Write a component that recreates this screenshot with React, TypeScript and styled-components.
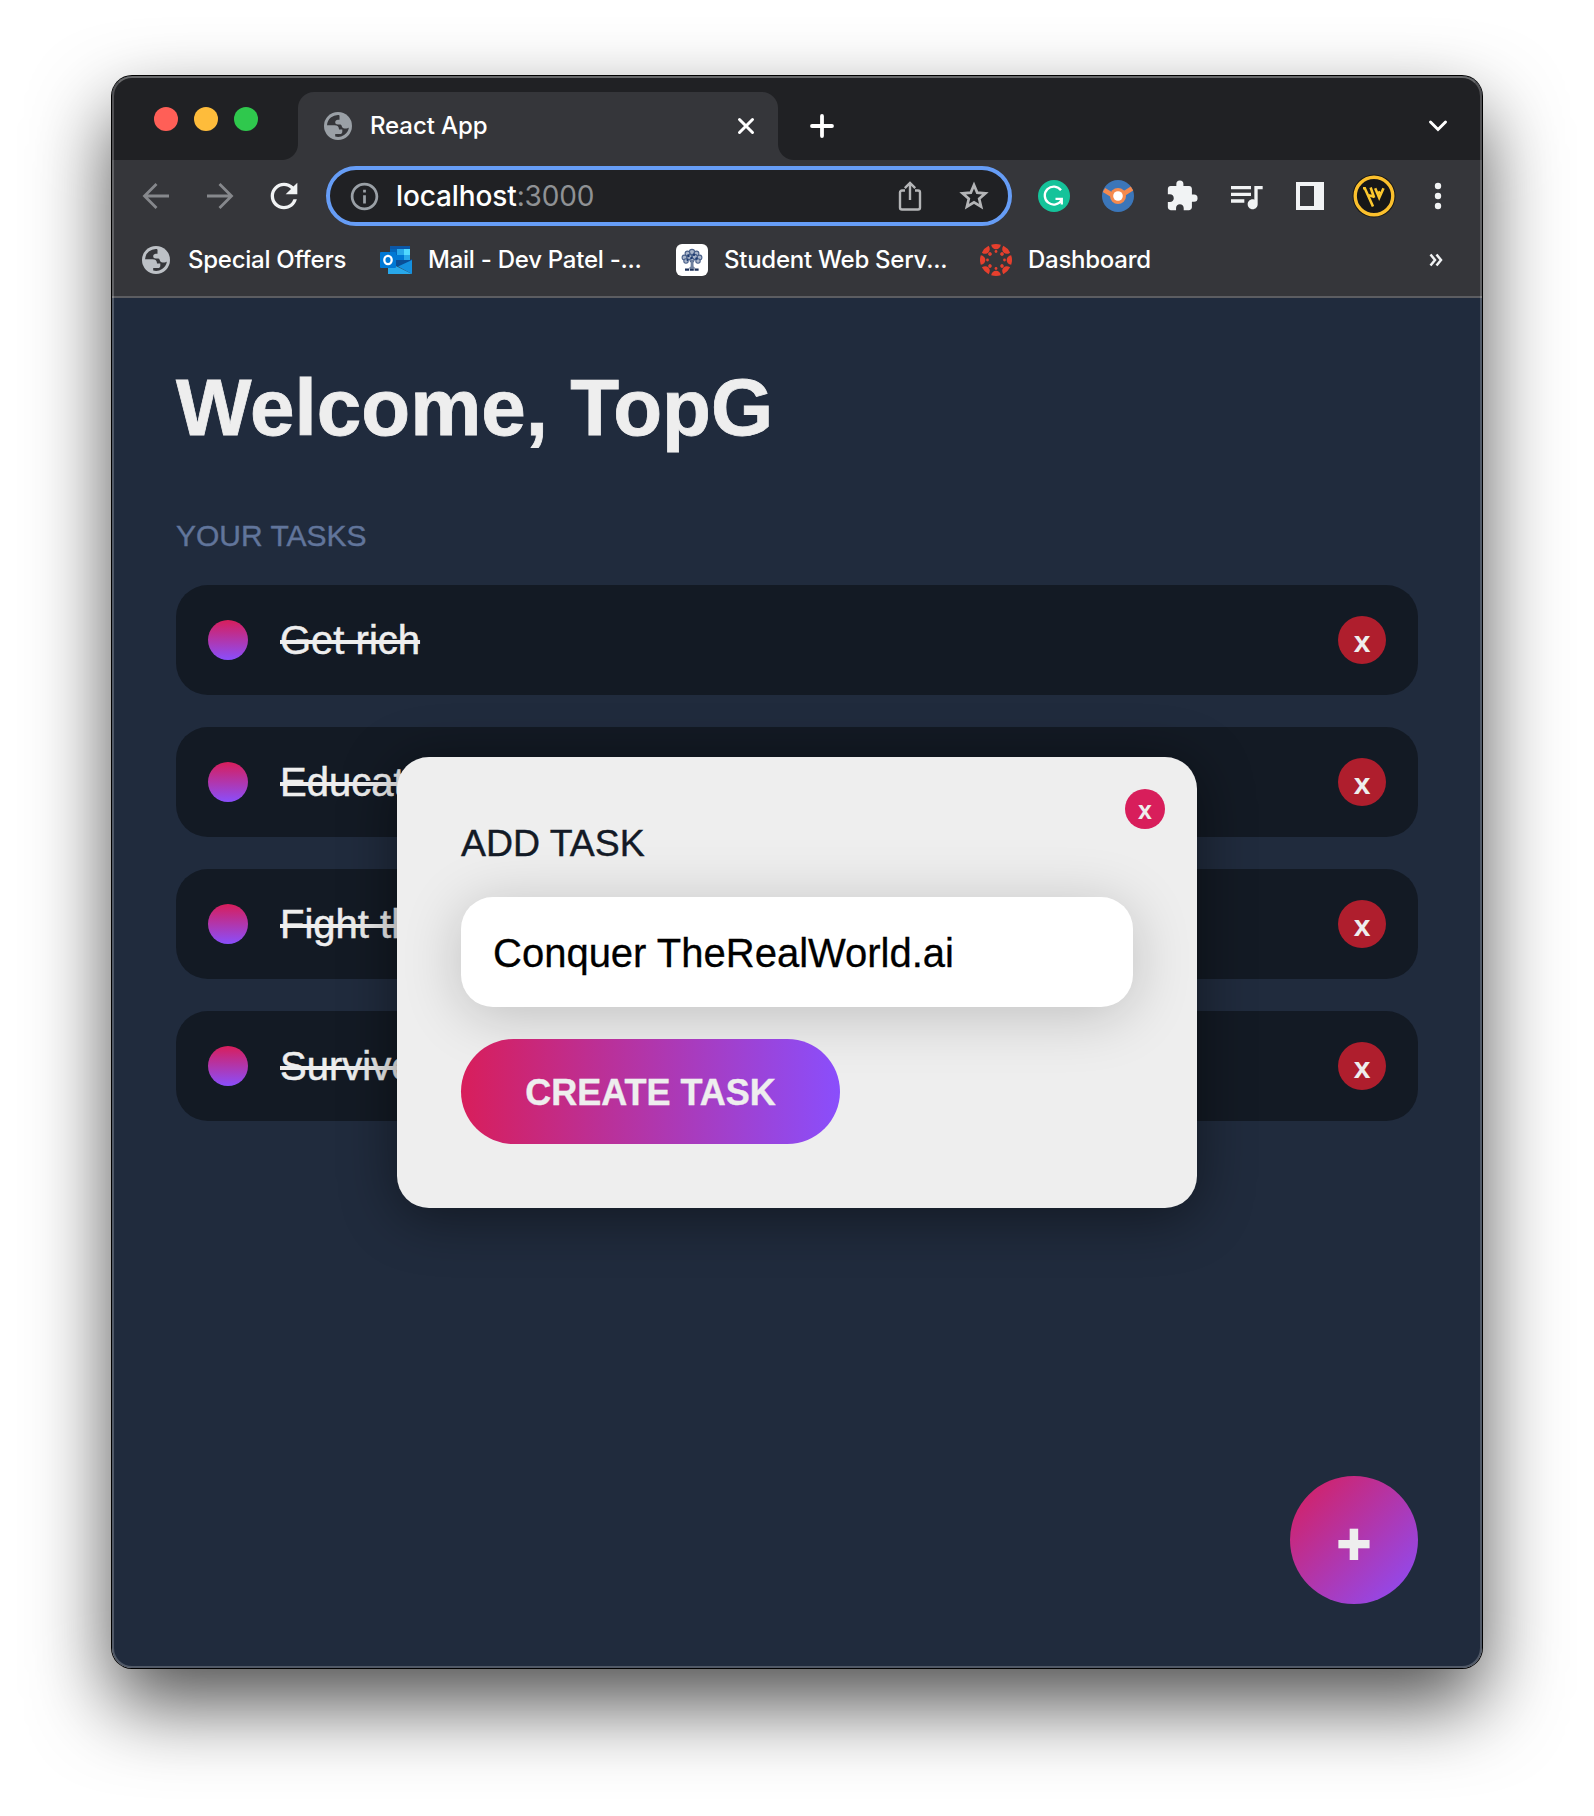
import React, { useState } from 'react';
import styled, { createGlobalStyle } from 'styled-components';
import { MdExtension, MdQueueMusic, MdOutlineInfo, MdRefresh } from 'react-icons/md';

const GlobalStyle = createGlobalStyle`
  * { box-sizing: border-box; margin: 0; padding: 0; }
  body { background: #fff; font-family: "Liberation Sans", Arial, sans-serif; overflow: hidden; }
  button { border: 0; background: none; font-family: inherit; color: inherit; display: flex; align-items: center; justify-content: center; }
  svg { display: block; flex: none; }
`;

const Desktop = styled.div`
  width: 1594px;
  height: 1816px;
  padding: 76px 112px 148px;
`;

const Window = styled.div`
  position: relative;
  display: flex;
  flex-direction: column;
  width: 1370px;
  height: 1592px;
  border-radius: 20px;
  overflow: hidden;
  background: #202b3d;
  &::after {
    content: '';
    position: absolute;
    inset: 0;
    border-radius: 20px;
    border: 2px solid rgba(255, 255, 255, 0.22);
    border-top-color: rgba(255, 255, 255, 0.32);
    pointer-events: none;
  }
`;

const Shadow = styled.div`
  width: 1370px;
  border-radius: 20px;
  box-shadow: 0 0 0 1px #000, 0 36px 80px rgba(0, 0, 0, 0.69);
`;

const Strip = styled.div`
  display: flex;
  height: 84px;
  padding: 16px 0 0 42px;
  background: #202124;
`;

const Lights = styled.div`
  display: flex;
  gap: 16px;
  padding-top: 15px;
  width: 144px;
`;

const Light = styled.span<{ $c: string }>`
  width: 24px;
  height: 24px;
  border-radius: 50%;
  background: ${(p) => p.$c};
`;

const Tab = styled.div`
  position: relative;
  display: flex;
  align-items: center;
  width: 480px;
  height: 68px;
  padding: 0 22px 0 26px;
  border-radius: 16px 16px 0 0;
  background: #35363a;
  &::before, &::after {
    content: '';
    position: absolute;
    bottom: 0;
    width: 16px;
    height: 16px;
  }
  &::before { left: -16px; background: radial-gradient(circle at 0 0, transparent 15.5px, #35363a 16.5px); }
  &::after { right: -16px; background: radial-gradient(circle at 100% 0, transparent 15.5px, #35363a 16.5px); }
`;

const UiText = styled.span`
  font: 500 24px/32px Inter, sans-serif;
  letter-spacing: -0.26px;
  white-space: nowrap;
  color: #fff;
`;

const TabTitle = styled(UiText)`
  flex: 1;
  margin-left: 18px;
  letter-spacing: -0.1px;
`;

const NewTab = styled.button`
  width: 56px;
  margin-left: 16px;
  height: 68px;
`;

const TabSearch = styled.button`
  margin-left: auto;
  width: 56px;
  height: 68px;
  margin-right: 16px;
`;

const Toolbar = styled.div`
  display: flex;
  align-items: center;
  height: 72px;
  padding: 0 12px;
  background: #35363a;
`;

const ToolButton = styled.button`
  width: 64px;
  height: 64px;
  flex: none;
`;

const NavGroup = styled.div`
  display: flex;
  flex: none;
  width: 198px;
`;

const Omnibox = styled.div`
  display: flex;
  align-items: center;
  flex: none;
  width: 686px;
  height: 60px;
  margin-left: 4px;
  padding: 0 14px 0 18px;
  border: 4px solid #669df6;
  border-radius: 30px;
  background: #202124;
`;

const Url = styled.span`
  flex: 1;
  margin-left: 15px;
  font: 500 28px/36px Inter, sans-serif;
  letter-spacing: -0.12px;
  color: #fff;
  & > span { color: #8f9194; font-weight: 400; }
`;

const OmniAction = styled.button`
  width: 40px;
  height: 40px;
  & + & { margin-left: 24px; }
`;

const Extensions = styled.div`
  display: flex;
  margin-left: 10px;
`;

const Bookmarks = styled.div`
  display: flex;
  align-items: center;
  height: 64px;
  padding: 0 16px 8px 30px;
  background: #35363a;
`;

const BarEdge = styled.div`
  height: 2px;
  background: #5c5d61;
`;

const Bookmark = styled.div<{ $w: number; $gap: number }>`
  display: flex;
  align-items: center;
  gap: ${(p) => p.$gap}px;
  width: ${(p) => p.$w}px;
`;

const More = styled.button`
  margin: 0 0 0 auto;
  width: 60px;
  height: 40px;
`;

const Page = styled.main`
  position: relative;
  flex: 1;
  padding: 64px;
`;

const Title = styled.h1`
  font-size: 80px;
  line-height: 92px;
  margin-bottom: 64px;
  color: #eee;
  -webkit-text-stroke: 0.8px currentColor;
`;

const Subtitle = styled.h4`
  font-size: 30px;
  font-weight: 400;
  line-height: 36px;
  margin: 0 0 31px;
  color: #61759b;
  -webkit-text-stroke: 0.4px currentColor;
`;

const TaskList = styled.div`
  display: grid;
  gap: 32px;
`;

const Task = styled.div`
  display: flex;
  align-items: center;
  height: 110px;
  padding: 0 32px;
  border-radius: 32px;
  background: #131a24;
`;

const Check = styled.span`
  width: 40px;
  height: 40px;
  margin-right: 32px;
  border-radius: 50%;
  background: linear-gradient(to bottom, #d81e5b, #8a4efc);
`;

const TaskText = styled.span`
  flex: 1;
  font-size: 40px;
  line-height: 46px;
  color: #eee;
  text-decoration: line-through;
  text-decoration-thickness: 4px;
  -webkit-text-stroke: 0.5px currentColor;
`;

const DeleteButton = styled.button`
  width: 48px;
  height: 48px;
  padding-top: 3px;
  border-radius: 50%;
  background: #af1e2d;
  color: #eee;
  font-size: 30px;
  line-height: 48px;
  font-weight: 700;
`;

const Fab = styled.button`
  position: absolute;
  right: 64px;
  bottom: 64px;
  width: 128px;
  height: 128px;
  padding-top: 7px;
  border-radius: 50%;
  background: linear-gradient(to bottom right, #d81e5b, #8a4efc);
  color: #eee;
  font-size: 58px;
  font-weight: 700;
  -webkit-text-stroke: 2px currentColor;
`;

const Popup = styled.section`
  position: absolute;
  left: 285px;
  top: 459px;
  width: 800px;
  height: 451px;
  padding: 64px;
  border-radius: 32px;
  background: #eee;
  box-shadow: 0 8px 56px rgba(0, 0, 0, 0.45);
`;

const ClosePopup = styled.button`
  position: absolute;
  top: 32px;
  right: 32px;
  width: 40px;
  height: 40px;
  padding-top: 2px;
  border-radius: 50%;
  background: #d81e5b;
  color: #eee;
  font-size: 25px;
  font-weight: 700;
`;

const PopupTitle = styled.h3`
  font-size: 37.44px;
  line-height: 44px;
  font-weight: 400;
  margin-bottom: 32px;
  color: #131a26;
  -webkit-text-stroke: 0.4px currentColor;
`;

const Field = styled.input`
  display: block;
  width: 100%;
  height: 110px;
  padding: 2px 32px 0;
  border: 0;
  outline: 0;
  border-radius: 32px;
  background: #fff;
  color: #000;
  font: 400 40px/46px "Liberation Sans", Arial, sans-serif;
  -webkit-text-stroke: 0.3px currentColor;
  box-shadow: 0 8px 60px rgba(0, 0, 0, 0.2);
`;

const CreateButton = styled.button`
  width: 379px;
  height: 105px;
  margin-top: 32px;
  padding-top: 2px;
  border-radius: 53px;
  background: linear-gradient(to right, #d81e5b, #8a4efc);
  color: #eee;
  font-size: 36px;
  font-weight: 700;
  white-space: nowrap;
  -webkit-text-stroke: 0.4px currentColor;
`;

const Globe = ({ color }: { color: string }) => (
  <svg width="28" height="28" viewBox="0 0 28 28">
    <circle cx="14" cy="14" r="14" fill={color} />
    <path
      fill="#35363a"
      d="M15 3A11 11 0 0 0 3 13.200H10.500c3 0 4.500 1.500 4.500 4.300H18.300v2.200c0 1.500-1 2.300-2.300 2.300h-4.800v2.500A11 11 0 0 0 24.900 15.500c-1.600 1.500-5.900 1.200-6.700-.3-.7-1.200-.3-2.700-2.200-2.700h-2.200c-1.500 0-2.600-1-2.600-2.300 0-1.500 1.200-2.500 2.600-2.500h1.700V5.500c0-1 .3-1.800-.5-2.500z"
    />
  </svg>
);

const Arrow = ({ flip = false }: { flip?: boolean }) => (
  <svg width="28" height="28" viewBox="0 0 28 28" fill="none" stroke="#86888c" strokeWidth="2.8" transform={flip ? 'scale(-1 1)' : undefined}>
    <path d="M27 14H3M14.5 2 2.5 14l12 12" />
  </svg>
);

const Share = () => (
  <svg width="24" height="30" viewBox="0 0 24 30" fill="none" stroke="#b4b5b7" strokeWidth="2.4">
    <path d="M7 9.5H4a2 2 0 0 0-2 2v15a2 2 0 0 0 2 2h16a2 2 0 0 0 2-2v-15a2 2 0 0 0-2-2h-3M12 19V3M6.8 7.2 12 2l5.2 5.2" />
  </svg>
);

const Star = () => (
  <svg width="30" height="30" viewBox="0 0 30 30" fill="none" stroke="#b4b5b7" strokeWidth="2.700">
    <path d="M15 4l3.200 7.600 8.200.7-6.200 5.400 1.900 8L15 21.400l-7.100 4.300 1.900-8-6.200-5.400 8.200-.7z" />
  </svg>
);

const Outlook = () => (
  <svg width="32" height="28" viewBox="0 0 32 28">
    <path fill="#0a57a8" d="M10 0h20v4H10z" />
    <path fill="#0364b8" d="M10 3h7v8h-7z" />
    <path fill="#28a8ea" d="M17 3h7v6h-7z" />
    <path fill="#50d9ff" d="M24 3h6v6h-6z" />
    <path fill="#0078d4" d="M10 9h14v6H10z" />
    <path fill="#28a8ea" d="M24 9h6v7h-6z" />
    <path fill="#0a4e96" d="M10 14h20l2-1v4L20 21l-10-3z" />
    <path fill="#1490df" d="M32 14v14L18 20.5z" />
    <path fill="#28a8ea" d="M8 16l24 12H8z" />
    <rect y="6" width="16" height="16" rx="1" fill="#0078d4" />
    <ellipse cx="8" cy="14" rx="3.7" ry="4.1" fill="none" stroke="#fff" strokeWidth="2.3" />
  </svg>
);

const Tree = () => (
  <svg width="32" height="32" viewBox="0 0 32 32">
    <rect width="32" height="32" rx="6" fill="#fff" />
    <g fill="#a9b5ca" stroke="#4a618a" strokeWidth="1.100">
      <circle cx="16" cy="8" r="2.600" /><circle cx="11.500" cy="9.500" r="2.400" /><circle cx="20.500" cy="9.500" r="2.400" />
      <circle cx="8.500" cy="13.500" r="2.400" /><circle cx="23.500" cy="13.500" r="2.400" />
      <circle cx="10" cy="17" r="2.200" /><circle cx="22" cy="17" r="2.200" />
      <circle cx="13.500" cy="13" r="2.600" /><circle cx="18.800" cy="13" r="2.600" />
      <circle cx="16" cy="16" r="2" />
    </g>
    <g fill="#1d3b72">
      <circle cx="12.500" cy="12" r="1.200" /><circle cx="18" cy="10.800" r="1.200" /><circle cx="20.500" cy="14.500" r="1.200" />
      <circle cx="15.500" cy="14" r="1.200" /><circle cx="11.500" cy="16" r="1" />
    </g>
    <path d="M14.800 16h2.600l.2 6.500 2 2h-7.200l2.200-2z" fill="#6d7f9e" />
    <path d="M9 25.700h14" stroke="#1d3159" strokeWidth="2.200" strokeDasharray="4 .8" />
  </svg>
);

const Canvas = () => (
  <svg width="32" height="32" viewBox="0 0 32 32" fill="#e63f2d">
    {[0, 45, 90, 135, 180, 225, 270, 315].map((a) => (
      <g key={a} transform={`rotate(${a} 16 16)`}>
        <path d="M11.200.8Q16-.8 20.800.8C20.300 3.600 18.500 5.300 16 5.300S11.700 3.600 11.200.8z" />
        <circle cx="16" cy="7.500" r={a % 90 ? 1.8 : 1.4} />
      </g>
    ))}
  </svg>
);

const Grammarly = () => (
  <svg width="32" height="32" viewBox="0 0 32 32" fill="none">
    <circle cx="16" cy="16" r="16" fill="#15c39a" />
    <path d="M23 10.200A9 9 0 1 0 23.600 20M17.500 18.800h6.300v5.600" stroke="#fff" strokeWidth="2.300" />
  </svg>
);

const Beacon = () => (
  <svg width="32" height="32" viewBox="0 0 32 32">
    <circle cx="16" cy="16" r="16" fill="#3b76b9" />
    <path d="M2 10l9 5.500M30 8.500l-9.500 6" stroke="#f58a4e" strokeWidth="4.600" />
    <circle cx="16" cy="16" r="8" fill="#f58a4e" />
    <circle cx="16" cy="16" r="4.800" fill="#fff" />
  </svg>
);

const SidePanel = () => (
  <svg width="28" height="28" viewBox="0 0 28 28">
    <path fillRule="evenodd" d="M0 0h28v28H0zM4 4v20h14V4z" fill="#f1f3f4" />
  </svg>
);

const Avatar = () => (
  <svg width="44" height="44" viewBox="0 0 44 44">
    <circle cx="22" cy="22" r="21.500" fill="#171717" />
    <circle cx="22" cy="22" r="18.800" fill="none" stroke="#fbc02d" strokeWidth="3.400" />
    <g fill="none" stroke="#fbc72e" strokeWidth="2.600">
      <path d="M11 14.300h1.800L21 32.500" />
      <path d="M18.600 13.500l3.600 10.300M16.600 21.200l5.600 1.500" />
      <path d="M23.200 14.300l4 9.500 4.300-9.500M24.800 19.500l3.400-1.500" />
    </g>
  </svg>
);

const Kebab = () => (
  <svg width="8" height="28" viewBox="0 0 8 28" fill="#f1f3f4">
    <circle cx="4" cy="4" r="3.200" /><circle cx="4" cy="14" r="3.200" /><circle cx="4" cy="24" r="3.200" />
  </svg>
);

const tasks = ['Get rich', 'Educate', 'Fight the', 'Survive'];

export default function App() {
  const [newTask, setNewTask] = useState('Conquer TheRealWorld.ai');
  return (
    <Desktop>
      <GlobalStyle />
      <Shadow>
        <Window>
          <Strip>
            <Lights>
              <Light $c="#ff5f57" />
              <Light $c="#febc3b" />
              <Light $c="#2fc84d" />
            </Lights>
            <Tab>
              <Globe color="#9aa0a6" />
              <TabTitle>React App</TabTitle>
              <svg width="20" height="20" viewBox="0 0 20 20" stroke="#fff" strokeWidth="3" strokeLinecap="round">
                <path d="M3.500 3.500l13 13M16.500 3.500l-13 13" />
              </svg>
            </Tab>
            <NewTab>
              <svg width="24" height="24" viewBox="0 0 24 24" stroke="#fff" strokeWidth="3.800" strokeLinecap="round">
                <path d="M12 2v20M2 12h20" />
              </svg>
            </NewTab>
            <TabSearch>
              <svg width="20" height="14" viewBox="0 0 20 14" fill="none" stroke="#fff" strokeWidth="3" strokeLinecap="round">
                <path d="M2.500 3l7.500 7.500L17.500 3" />
              </svg>
            </TabSearch>
          </Strip>
          <Toolbar>
            <NavGroup>
              <ToolButton><Arrow /></ToolButton>
              <ToolButton><Arrow flip /></ToolButton>
              <ToolButton><MdRefresh size={40} color="#f1f3f4" /></ToolButton>
            </NavGroup>
            <Omnibox>
              <MdOutlineInfo size={33} color="#9aa0a6" />
              <Url>localhost<span>:3000</span></Url>
              <OmniAction><Share /></OmniAction>
              <OmniAction><Star /></OmniAction>
            </Omnibox>
            <Extensions>
              <ToolButton><Grammarly /></ToolButton>
              <ToolButton><Beacon /></ToolButton>
              <ToolButton><MdExtension size={34} color="#f1f3f4" /></ToolButton>
              <ToolButton><MdQueueMusic size={40} color="#f1f3f4" /></ToolButton>
              <ToolButton><SidePanel /></ToolButton>
              <ToolButton><Avatar /></ToolButton>
              <ToolButton><Kebab /></ToolButton>
            </Extensions>
          </Toolbar>
          <Bookmarks>
            <Bookmark $w={238} $gap={18}><Globe color="#bdc1c6" /><UiText>Special Offers</UiText></Bookmark>
            <Bookmark $w={296} $gap={16}><Outlook /><UiText>Mail - Dev Patel -...</UiText></Bookmark>
            <Bookmark $w={304} $gap={16}><Tree /><UiText>Student Web Serv...</UiText></Bookmark>
            <Bookmark $w={200} $gap={16}><Canvas /><UiText>Dashboard</UiText></Bookmark>
            <More>
              <svg width="14" height="14" viewBox="0 0 14 14" fill="none" stroke="#f1f3f4" strokeWidth="2.500">
                <path d="M1.500 1.500L6 7l-4.500 5.500M7.500 1.500L12 7l-4.500 5.500" />
              </svg>
            </More>
          </Bookmarks>
          <BarEdge />
          <Page>
            <Title>Welcome, TopG</Title>
            <Subtitle>YOUR TASKS</Subtitle>
            <TaskList>
              {tasks.map((task) => (
                <Task key={task}>
                  <Check />
                  <TaskText>{task}</TaskText>
                  <DeleteButton>x</DeleteButton>
                </Task>
              ))}
            </TaskList>
            <Fab>+</Fab>
            <Popup>
              <ClosePopup>x</ClosePopup>
              <PopupTitle>ADD TASK</PopupTitle>
              <Field value={newTask} onChange={(e) => setNewTask(e.target.value)} />
              <CreateButton>CREATE TASK</CreateButton>
            </Popup>
          </Page>
        </Window>
      </Shadow>
    </Desktop>
  );
}
